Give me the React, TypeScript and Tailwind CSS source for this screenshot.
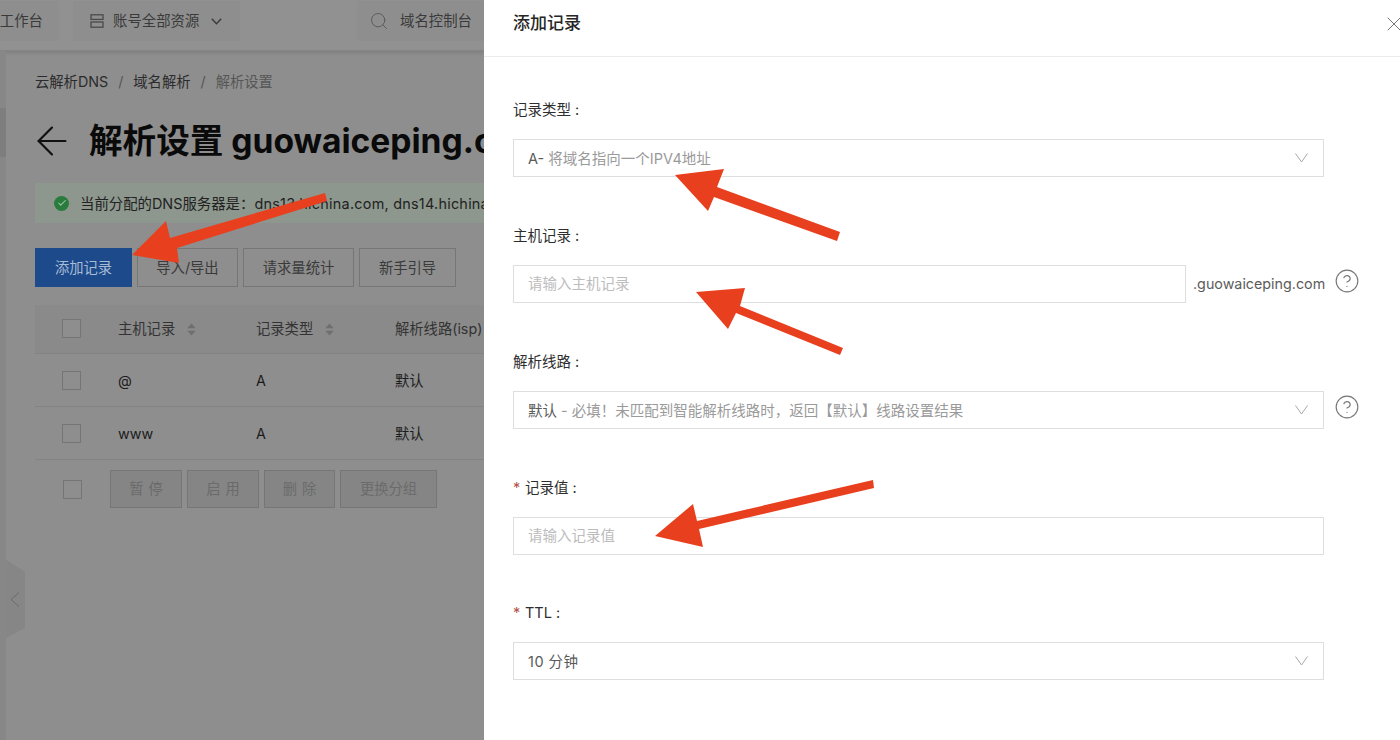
import React from "react";
import { Search, X, CircleHelp, ArrowLeft, Check } from "lucide-react";

function Sorter() {
  return (
    <svg width="9" height="13" viewBox="0 0 9 13" className="ml-[12px] mt-[2px] shrink-0">
      <path d="M4.5 0.5 L8.7 5.3 H0.3 Z" fill="#6f6f6f" />
      <path d="M4.5 12.5 L8.7 7.7 H0.3 Z" fill="#6f6f6f" />
    </svg>
  );
}

function Cb() {
  return <div className="w-[19px] h-[19px] border border-[#757575] bg-[#8e8e8e]" />;
}

function Row({ a, b, c }: { a: string; b: string; c: string }) {
  return (
    <div className="flex items-center h-[53px] border-b border-[#838383] text-[14.3px] text-[#1c1c1c]">
      <div className="w-[83px] pl-[27px]"><Cb /></div>
      <div className="w-[138px] pt-[1px]">{a}</div>
      <div className="w-[139px] pt-[1px]">{b}</div>
      <div className="pt-[1px]">{c}</div>
    </div>
  );
}

function HeadCell({ t, w }: { t: string; w: string }) {
  return (
    <div className={`flex items-center ${w}`}>
      <span>{t}</span>
      <Sorter />
    </div>
  );
}

function BulkBtn({ t, w, tracked }: { t: string; w: string; tracked?: boolean }) {
  return (
    <div className={`${w} h-[38px] flex items-center justify-center border border-[#767676] bg-[#858585] text-[14.3px] text-[#6b6b6b] ${tracked ? "tracking-[5px] pl-[5px]" : ""}`}>
      {t}
    </div>
  );
}

function ToolBtn({ t, w }: { t: string; w: string }) {
  return (
    <div className={`${w} h-[39px] flex items-center justify-center border border-[#767676] text-[14.3px] text-[#3a3a3a]`}>
      {t}
    </div>
  );
}

function Page() {
  return (
    <div className="w-[484px] shrink-0 h-full bg-[#8e8e8e] flex flex-col overflow-hidden">
      <div className="h-[51px] shrink-0 bg-[#919191] border-b border-[#858585] shadow-[0_2px_4px_rgba(0,0,0,0.12)] flex items-start pt-[1px] text-[14.4px] text-[#3a3a3a] whitespace-nowrap">
        <div className="w-[59px] h-[40px] bg-[#8e8e8e] flex items-center justify-end pr-[16px] shrink-0 overflow-hidden">工作台</div>
        <div className="ml-[14px] w-[167px] h-[40px] bg-[#8e8e8e] flex items-center pl-[17px] shrink-0">
          <svg width="14" height="14" viewBox="0 0 14 14" fill="none" stroke="#4a4a4a" strokeWidth="1.3">
            <rect x="1" y="0.8" width="12" height="4.6" />
            <rect x="1" y="8" width="12" height="5.2" />
          </svg>
          <span className="ml-[9px]">账号全部资源</span>
          <svg width="11" height="7" viewBox="0 0 11 7" fill="none" stroke="#3a3a3a" strokeWidth="1.4" className="ml-[12px]">
            <path d="M0.8 0.8 L5.5 5.8 L10.2 0.8" />
          </svg>
        </div>
        <div className="ml-[117px] h-[40px] flex-1 bg-[#8e8e8e] flex items-center pl-[12px]">
          <Search size={20} strokeWidth={1.2} color="#5c5c5c" />
          <span className="ml-[11px]">域名控制台</span>
        </div>
      </div>

      <div className="flex flex-1 min-h-0">
        <div className="w-[6px] shrink-0 bg-[#878787] flex flex-col relative">
          <div className="mt-[57px] h-[49px] bg-[#7e7e7e]" />
          <div className="absolute left-[6px] top-[509px] w-[19px] h-[78px] flex items-center justify-center bg-[#868686] [clip-path:polygon(0_0,100%_15%,100%_87%,0_100%)]">
            <svg width="10" height="15" viewBox="0 0 10 15" fill="none" stroke="#6c6c6c" strokeWidth="1" className="ml-[-1px] mt-[1px]">
              <path d="M9 0.5 L1 7.5 L9 14.5" />
            </svg>
          </div>
        </div>
        <div className="flex-1 min-w-0 pl-[29px]">
          <div className="mt-[21px] h-[20px] flex items-center text-[14.3px] text-[#2b2b2b] whitespace-nowrap">
            <span>云解析DNS</span>
            <span className="mx-[10px] text-[#555555]">/</span>
            <span>域名解析</span>
            <span className="mx-[10px] text-[#555555]">/</span>
            <span className="text-[#565656]">解析设置</span>
          </div>

          <div className="mt-[27px] h-[44px] flex items-center whitespace-nowrap overflow-hidden">
            <ArrowLeft size={46} strokeWidth={1.15} color="#111111" className="ml-[-6px] shrink-0" />
            <span className="ml-[14px] text-[33.6px] font-bold text-[#0a0a0a]">解析设置 guowaiceping.com</span>
          </div>

          <div className="mt-[20px] h-[40px] bg-[#8d978d] flex items-center pl-[19px] whitespace-nowrap overflow-hidden text-[14.4px] text-[#222222]">
            <div className="w-[15px] h-[15px] rounded-full bg-[#2a7c3c] flex items-center justify-center shrink-0">
              <Check size={10} strokeWidth={2.5} color="#9fc8a8" />
            </div>
            <span className="ml-[11px] pt-[2px]">
              当前分配的DNS服务器是：<span className="tracking-[0.25px]">dns13.hichina.com, dns14.hichina.com</span>
            </span>
          </div>

          <div className="mt-[25px] flex gap-[5px] whitespace-nowrap">
            <div className="w-[97px] h-[39px] bg-[#1c4a8a] flex items-center justify-center text-[14.3px] text-[#a9bcd6]">添加记录</div>
            <ToolBtn t="导入/导出" w="w-[101px]" />
            <ToolBtn t="请求量统计" w="w-[111px]" />
            <ToolBtn t="新手引导" w="w-[97px]" />
          </div>

          <div className="mt-[18px] whitespace-nowrap">
            <div className="flex items-center h-[49px] pb-[1px] bg-[#8a8a8a] border-b border-[#838383] text-[14.3px] text-[#333333]">
              <div className="w-[83px] pl-[27px]"><Cb /></div>
              <HeadCell t="主机记录" w="w-[138px]" />
              <HeadCell t="记录类型" w="w-[139px]" />
              <span>解析线路(isp)</span>
            </div>
            <Row a="@" b="A" c="默认" />
            <Row a="www" b="A" c="默认" />
            <div className="flex items-center h-[58px]">
              <div className="w-[75px] pl-[28px] shrink-0"><Cb /></div>
              <div className="flex gap-[5px]">
                <BulkBtn t="暂停" w="w-[72px]" tracked />
                <BulkBtn t="启用" w="w-[72px]" tracked />
                <BulkBtn t="删除" w="w-[71px]" tracked />
                <BulkBtn t="更换分组" w="w-[97px]" />
              </div>
            </div>
          </div>
        </div>
      </div>
    </div>
  );
}

function Field({ label, required, short, children }: { label: string; required?: boolean; short?: boolean; children: React.ReactNode }) {
  return (
    <div className={short ? "h-[125px]" : "h-[126px]"}>
      <div className="h-[20px] pt-[2px] flex items-center text-[14.5px] text-[#2e2e2e]">
        {required && <span className="text-[#b5544a] mr-[5px] w-[7px]">*</span>}
        <span>{label}</span>
        <span className="ml-[4px]">:</span>
      </div>
      <div className="mt-[20px] flex items-start">{children}</div>
    </div>
  );
}

function SelectBox({ value }: { value: React.ReactNode }) {
  return (
    <div className="w-[811px] h-[38px] shrink-0 border border-[#dedede] flex items-center justify-between pl-[14px] pr-[15px] text-[14.5px] text-[#9a9a9a]">
      <span className="pt-[1px]">{value}</span>
      <svg width="13" height="10" viewBox="0 0 13 10" fill="none" stroke="#a8a8a8" strokeWidth="1">
        <path d="M0.5 0.5 L6.5 9 L12.5 0.5" />
      </svg>
    </div>
  );
}

function Drawer() {
  return (
    <div className="flex-1 h-full bg-white overflow-hidden whitespace-nowrap">
      <div className="h-[57px] border-b border-[#ececec] pl-[29px] pt-[11px] relative">
        <div className="text-[17px] leading-[24px] font-medium text-[#262626]">添加记录</div>
        <X size={24} strokeWidth={1} color="#777777" className="absolute left-[898px] top-[12px]" />
      </div>
      <div className="pl-[29px] pt-[42px]">
        <Field label="记录类型">
          <SelectBox value={<><span className="text-[#5a5a5a]">A-</span> 将域名指向一个IPV4地址</>} />
        </Field>
        <Field label="主机记录">
          <div className="w-[673px] h-[38px] shrink-0 border border-[#dedede] flex items-center pl-[14px] text-[14.5px] text-[#bcbcbc]">请输入主机记录</div>
          <span className="ml-[7px] w-[131px] h-[38px] flex items-center text-[14.3px] text-[#5c5c5c] shrink-0">.guowaiceping.com</span>
          <CircleHelp size={26} strokeWidth={1.05} color="#777777" className="ml-[10px] mt-[3px] shrink-0" />
        </Field>
        <Field label="解析线路">
          <SelectBox value={<><span className="text-[#5a5a5a]">默认</span> - 必填！未匹配到智能解析线路时，返回【默认】线路设置结果</>} />
          <CircleHelp size={26} strokeWidth={1.05} color="#777777" className="ml-[10px] mt-[3px] shrink-0" />
        </Field>
        <Field label="记录值" required short>
          <div className="w-[811px] h-[38px] shrink-0 border border-[#dedede] flex items-center pl-[14px] text-[14.5px] text-[#bcbcbc]">请输入记录值</div>
        </Field>
        <Field label="TTL" required>
          <SelectBox value={<span className="text-[#5a5a5a] tracking-[0.5px]">10 分钟</span>} />
        </Field>
      </div>
    </div>
  );
}

function Annotations() {
  const c = "#e8401f";
  return (
    <svg className="absolute inset-0 pointer-events-none" width="1400" height="740" viewBox="0 0 1400 740">
      <polygon fill={c} points="132,255 166,221 170,238 325,193 327,201 177,248 179,263" />
      <polygon fill={c} points="675,175 724,169 717,187 840,232 837,241 714,197 708,211" />
      <polygon fill={c} points="696,292 745,288 740,306 843,348 840,355 736,313 728,329" />
      <polygon fill={c} points="655,536 693,504 697,521 873,480 874,488 699,529 703,547" />
    </svg>
  );
}

export default function App() {
  return (
    <div className="relative w-[1400px] h-[740px] overflow-hidden flex [font-family:Inter,'Noto_Sans_CJK_SC',sans-serif]">
      <Page />
      <Drawer />
      <Annotations />
    </div>
  );
}
